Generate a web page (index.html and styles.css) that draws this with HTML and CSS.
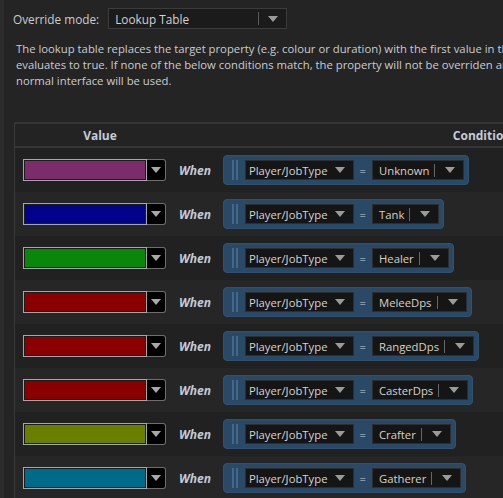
FILE: index.html
```html
<!DOCTYPE html>
<html lang="en">

<head>
  <meta charset="UTF-8">
  <title>Lookup Table</title>
  <link rel="stylesheet" href="styles.css">
</head>

<body>
  <div class="panel">
    <div class="mode-row">
      <span class="mode-label">Override mode:</span>
      <div class="combo">
        <span class="combo-text">Lookup Table</span>
        <span class="combo-sep"></span>
        <span class="tri"></span>
      </div>
    </div>

    <p class="help">
      The lookup table replaces the target property (e.g. colour or duration) with the first value in the table for which the condition<br>
      evaluates to true. If none of the below conditions match, the property will not be overriden and the<br>
      normal interface will be used.
    </p>

    <div class="table">
      <div class="thead">
        <div class="th th-value">Value</div>
        <div class="th th-cond">Conditions</div>
      </div>

      <div class="row">
        <div class="swatch"><span class="fill fill-magenta"></span><span class="swatch-btn"><span class="tri"></span></span></div>
        <span class="when">When</span>
        <div class="cond">
          <span class="handle"></span>
          <div class="drop"><span>Player/JobType</span><span class="tri"></span></div>
          <span class="eq">=</span>
          <div class="drop drop-value"><span>Unknown</span><span class="drop-sep"></span><span class="tri"></span></div>
        </div>
      </div>

      <div class="row">
        <div class="swatch"><span class="fill fill-navy"></span><span class="swatch-btn"><span class="tri"></span></span></div>
        <span class="when">When</span>
        <div class="cond">
          <span class="handle"></span>
          <div class="drop"><span>Player/JobType</span><span class="tri"></span></div>
          <span class="eq">=</span>
          <div class="drop drop-value"><span>Tank</span><span class="drop-sep"></span><span class="tri"></span></div>
        </div>
      </div>

      <div class="row">
        <div class="swatch"><span class="fill fill-green"></span><span class="swatch-btn"><span class="tri"></span></span></div>
        <span class="when">When</span>
        <div class="cond">
          <span class="handle"></span>
          <div class="drop"><span>Player/JobType</span><span class="tri"></span></div>
          <span class="eq">=</span>
          <div class="drop drop-value"><span>Healer</span><span class="drop-sep"></span><span class="tri"></span></div>
        </div>
      </div>

      <div class="row">
        <div class="swatch"><span class="fill fill-red"></span><span class="swatch-btn"><span class="tri"></span></span></div>
        <span class="when">When</span>
        <div class="cond">
          <span class="handle"></span>
          <div class="drop"><span>Player/JobType</span><span class="tri"></span></div>
          <span class="eq">=</span>
          <div class="drop drop-value"><span>MeleeDps</span><span class="drop-sep"></span><span class="tri"></span></div>
        </div>
      </div>

      <div class="row">
        <div class="swatch"><span class="fill fill-red"></span><span class="swatch-btn"><span class="tri"></span></span></div>
        <span class="when">When</span>
        <div class="cond">
          <span class="handle"></span>
          <div class="drop"><span>Player/JobType</span><span class="tri"></span></div>
          <span class="eq">=</span>
          <div class="drop drop-value"><span>RangedDps</span><span class="drop-sep"></span><span class="tri"></span></div>
        </div>
      </div>

      <div class="row">
        <div class="swatch"><span class="fill fill-red"></span><span class="swatch-btn"><span class="tri"></span></span></div>
        <span class="when">When</span>
        <div class="cond">
          <span class="handle"></span>
          <div class="drop"><span>Player/JobType</span><span class="tri"></span></div>
          <span class="eq">=</span>
          <div class="drop drop-value"><span>CasterDps</span><span class="drop-sep"></span><span class="tri"></span></div>
        </div>
      </div>

      <div class="row">
        <div class="swatch"><span class="fill fill-olive"></span><span class="swatch-btn"><span class="tri"></span></span></div>
        <span class="when">When</span>
        <div class="cond">
          <span class="handle"></span>
          <div class="drop"><span>Player/JobType</span><span class="tri"></span></div>
          <span class="eq">=</span>
          <div class="drop drop-value"><span>Crafter</span><span class="drop-sep"></span><span class="tri"></span></div>
        </div>
      </div>

      <div class="row">
        <div class="swatch"><span class="fill fill-teal"></span><span class="swatch-btn"><span class="tri"></span></span></div>
        <span class="when">When</span>
        <div class="cond">
          <span class="handle"></span>
          <div class="drop"><span>Player/JobType</span><span class="tri"></span></div>
          <span class="eq">=</span>
          <div class="drop drop-value"><span>Gatherer</span><span class="drop-sep"></span><span class="tri"></span></div>
        </div>
      </div>
    </div>
  </div>
</body>

</html>
```

FILE: styles.css
```css
body {
  margin: 0;
  background-color: #242424;
  color: #c9ccd1;
  font-family: "Open Sans", "Noto Sans", sans-serif;
  font-size: 11.3px;
  overflow: hidden;
}

.panel {
  width: 900px;
  height: 498px;
  border-left: 4px solid #2c2c2c;
  padding: 8px 0 0 9px;
  box-sizing: border-box;
}

/* top combo */
.mode-row {
  display: flex;
  align-items: center;
  gap: 9px;
  height: 21px;
  font-size: 11.8px;
}

.combo {
  display: flex;
  align-items: center;
  width: 179px;
  height: 21px;
  box-sizing: border-box;
  padding: 0 8px 0 6px;
  background-color: #1b1b1b;
  border: 1px solid #3c3c3c;
  color: #d2d2d2;
}

.combo-text {
  flex: 1;
}

.combo-sep {
  width: 1px;
  height: 13px;
  background-color: #5a5a5a;
  margin-right: 9px;
}

.tri {
  width: 0;
  height: 0;
  border-left: 5px solid transparent;
  border-right: 5px solid transparent;
  border-top: 6px solid #9a9a9a;
}

.help {
  margin: 12px 0 0 3px;
  line-height: 16px;
  white-space: nowrap;
}

/* table */
.table {
  margin-top: 33px;
  margin-left: 1px;
  border-left: 1px solid #3a3a3a;
  border-top: 2px solid #353535;
}

.thead {
  display: flex;
  height: 22px;
  align-items: center;
  border-bottom: 2px solid #353535;
  background-color: #232323;
  font-size: 12px;
  font-weight: bold;
  color: #c6cbd6;
}

.th-value {
  width: 170px;
  text-align: center;
}

.th-cond {
  width: 600px;
  text-align: center;
}

.row {
  display: flex;
  align-items: center;
  height: 44px;
  padding-left: 8px;
  background-color: #212121;
}

.row:nth-child(odd) {
  background-color: #262626;
}

.swatch {
  display: flex;
  height: 22px;
}

.fill {
  width: 124px;
  box-sizing: border-box;
  border: 1px solid #a0a8a8;
  box-shadow: inset 0 0 0 1px #1c1c1c;
}

.fill-magenta { background-color: #7c2c6a; }
.fill-navy { background-color: #02028a; }
.fill-green { background-color: #0a870a; }
.fill-red { background-color: #8a0000; }
.fill-olive { background-color: #6a7f00; }
.fill-teal { background-color: #006a8a; }

.swatch-btn {
  display: flex;
  align-items: center;
  justify-content: center;
  width: 19px;
  box-sizing: border-box;
  background-color: #000;
  border: 1px solid #6e6e6e;
  border-left: none;
  border-radius: 0 3px 3px 0;
}

.swatch-btn .tri {
  border-top-color: #a8a8a8;
}

.when {
  margin-left: 13px;
  font-size: 12px;
  font-weight: bold;
  font-style: italic;
  color: #c4cad8;
}

.cond {
  display: flex;
  align-items: center;
  margin-left: 12px;
  height: 30px;
  box-sizing: border-box;
  padding: 0 4px 0 8px;
  background-color: #2a4966;
  border: 1px solid #305270;
  border-radius: 4px;
}

.handle {
  width: 2px;
  height: 20px;
  background-color: #44688a;
  box-shadow: 4px 0 0 #44688a;
  margin-right: 11px;
}

.drop {
  display: flex;
  align-items: center;
  height: 20px;
  box-sizing: border-box;
  padding: 0 8px 0 3px;
  background-color: #151515;
  border: 1px solid #2e2e2e;
  color: #d4d4d4;
  gap: 7px;
}

.eq {
  margin: 0 6px;
  color: #c8ccd4;
}

.drop-value {
  padding-left: 6px;
  gap: 0;
  color: #d8d2c4;
}

.drop-sep {
  width: 1px;
  height: 13px;
  background-color: #666;
  margin: 0 10px 0 5px;
}
```
